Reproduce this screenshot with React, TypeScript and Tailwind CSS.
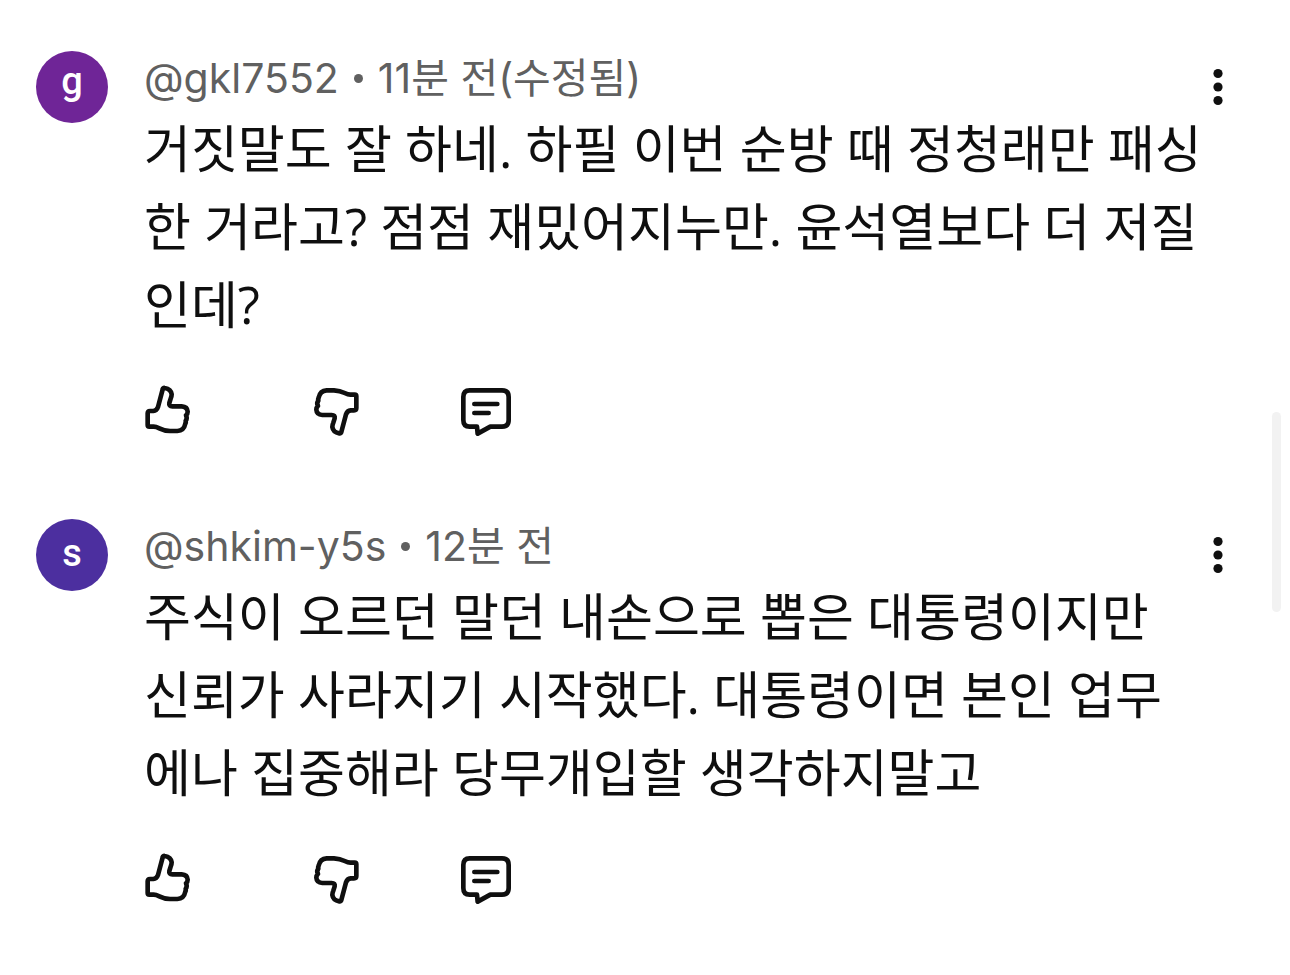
import { Fragment } from "react";

type Comment = {
  handle: string;
  initial: string;
  time: string;
  lines: string[];
  avatarClass: string;
};

const comments: Comment[] = [
  {
    handle: "@gkl7552",
    initial: "g",
    time: "11분 전(수정됨)",
    lines: [
      "거짓말도 잘 하네. 하필 이번 순방 때 정청래만 패싱",
      "한 거라고? 점점 재밌어지누만. 윤석열보다 더 저질",
      "인데?",
    ],
    avatarClass: "bg-[#6f2597] pb-3",
  },
  {
    handle: "@shkim-y5s",
    initial: "s",
    time: "12분 전",
    lines: [
      "주식이 오르던 말던 내손으로 뽑은 대통령이지만",
      "신뢰가 사라지기 시작했다. 대통령이면 본인 업무",
      "에나 집중해라 당무개입할 생각하지말고",
    ],
    avatarClass: "bg-[#4c2f9f] pb-1",
  },
];

const thumbPath =
  "M53 130Q53 123 60 123L70 123Q80 122 84 111L98 58Q99 53 104 54Q123 57 125 73Q125 79 122 86L118 99Q116 109 127 109L155 109Q172 110 173 125Q173 132 168 136Q173 145 167 152Q168 157 166 161Q162 182 142 183L120 183Q102 182 88 175Q78 170 71 170L58 170Q53 170 53 165Z";

const iconProps = {
  fill: "none",
  stroke: "currentColor",
  strokeWidth: 14,
  strokeLinecap: "round" as const,
  strokeLinejoin: "round" as const,
  className: "size-[52px]",
  "aria-hidden": true,
};

function LikeIcon() {
  return (
    <svg viewBox="39 42 156 156" {...iconProps}>
      <path d={thumbPath} />
    </svg>
  );
}

function DislikeIcon() {
  return (
    <svg viewBox="33 42 156 156" {...iconProps}>
      <path d={thumbPath} transform="rotate(180 111 122)" />
    </svg>
  );
}

function ReplyIcon() {
  return (
    <svg viewBox="45 42 156 156" {...iconProps}>
      <path d="M74 61H171Q191 61 191 81V150Q191 170 171 170H136L98 191L96 170H74Q55 170 55 150V81Q55 61 74 61Z" />
      <path d="M88 102H157M88 129H131" />
    </svg>
  );
}

function MoreIcon() {
  return (
    <svg viewBox="0 0 12 40" className="h-10 w-3" fill="currentColor" aria-hidden>
      <circle cx="6" cy="6.5" r="4.6" />
      <circle cx="6" cy="20" r="4.6" />
      <circle cx="6" cy="33.5" r="4.6" />
    </svg>
  );
}

function CommentItem({ comment }: { comment: Comment }) {
  return (
    <article className="flex items-start">
      <div
        className={`mt-3 flex size-[72px] shrink-0 items-center justify-center rounded-full font-['Roboto',sans-serif] text-[38px] leading-[48px] font-medium text-white ${comment.avatarClass}`}
      >
        {comment.initial}
      </div>
      <div className="ml-9 min-w-0 flex-1">
        <header className="flex h-[70px] items-center pt-2 whitespace-pre text-[41px] leading-[62px] text-[#606060]">
          <span>{comment.handle}</span>
          <span className="mx-[15px] size-[9px] rounded-full bg-[#606060]" />
          <span>{comment.time}</span>
        </header>
        <p className="whitespace-nowrap font-['Open_Sans','Noto_Sans_CJK_KR',sans-serif] text-[51px] leading-[78px] text-[#0f0f0f]">
          {comment.lines.map((line, i) => (
            <Fragment key={line}>
              {i > 0 && <br />}
              {line}
            </Fragment>
          ))}
        </p>
        <div className="mt-[41px] -ml-px flex text-[#0f0f0f]">
          <button type="button" aria-label="Like">
            <LikeIcon />
          </button>
          <button type="button" aria-label="Dislike" className="ml-[116px]">
            <DislikeIcon />
          </button>
          <button type="button" aria-label="Reply" className="ml-[97px]">
            <ReplyIcon />
          </button>
        </div>
      </div>
      <button type="button" aria-label="More" className="mt-7 shrink-0 text-[#0f0f0f]">
        <MoreIcon />
      </button>
    </article>
  );
}

export default function App() {
  return (
    <main className="relative min-h-screen bg-white pt-[39px] pr-[66px] pb-8 pl-9 font-['Inter','Noto_Sans_CJK_KR',sans-serif]">
      <div className="flex flex-col gap-[71px]">
        {comments.map((comment) => (
          <CommentItem key={comment.handle} comment={comment} />
        ))}
      </div>
      <div className="absolute top-[412px] right-[9px] h-[200px] w-[9px] rounded-full bg-[#f2f2f2]" />
    </main>
  );
}
